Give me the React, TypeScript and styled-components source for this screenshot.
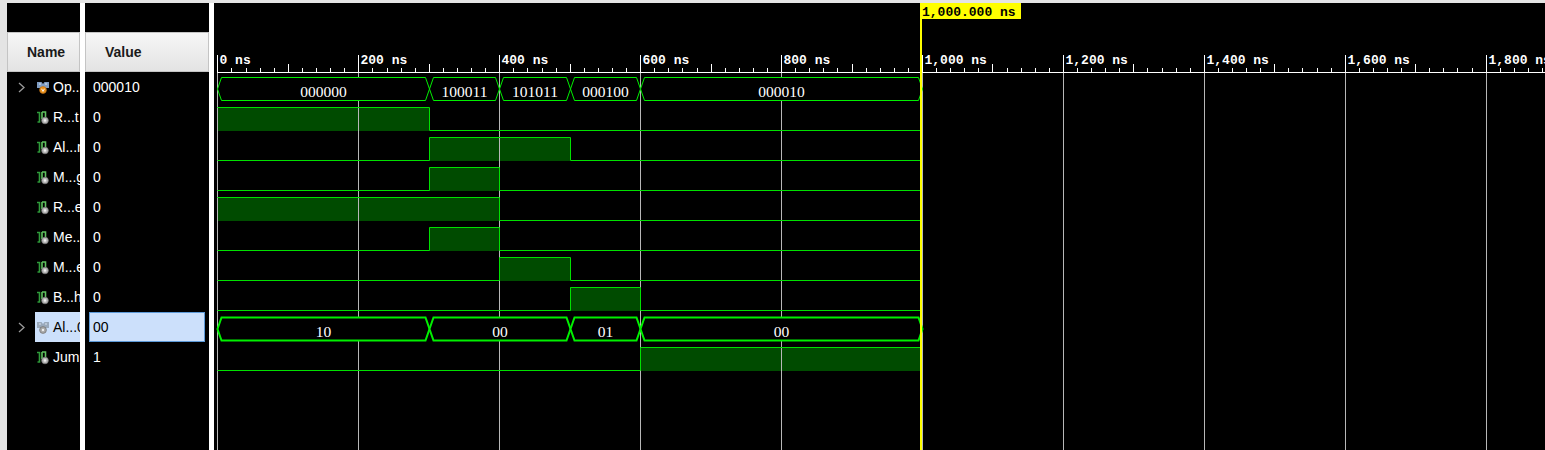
import React from 'react';
import styled, { createGlobalStyle } from 'styled-components';

const GlobalStyle = createGlobalStyle`
  html, body {
    margin: 0;
    padding: 0;
    background: #e4e4e4;
    overflow: hidden;
  }
`;

type Seg = [number, number, string];
type Signal = {
  name: string;
  value: string;
  kind: 'bus' | 'bit';
  segs?: Seg[];
  highs?: [number, number][];
  selected?: boolean;
};

const signals: Signal[] = [
  {
    name: 'Op...',
    value: '000010',
    kind: 'bus',
    segs: [
      [0, 300, '000000'],
      [300, 400, '100011'],
      [400, 500, '101011'],
      [500, 600, '000100'],
      [600, 1000, '000010'],
    ],
  },
  { name: 'R...t', value: '0', kind: 'bit', highs: [[0, 300]] },
  { name: 'Al...n', value: '0', kind: 'bit', highs: [[300, 500]] },
  { name: 'M...g', value: '0', kind: 'bit', highs: [[300, 400]] },
  { name: 'R...e', value: '0', kind: 'bit', highs: [[0, 400]] },
  { name: 'Me...', value: '0', kind: 'bit', highs: [[300, 400]] },
  { name: 'M...e', value: '0', kind: 'bit', highs: [[400, 500]] },
  { name: 'B...h', value: '0', kind: 'bit', highs: [[500, 600]] },
  {
    name: 'Al...0',
    value: '00',
    kind: 'bus',
    selected: true,
    segs: [
      [0, 300, '10'],
      [300, 500, '00'],
      [500, 600, '01'],
      [600, 1000, '00'],
    ],
  },
  { name: 'Jump', value: '1', kind: 'bit', highs: [[600, 1000]] },
];

const ROW_TOP = 72;
const ROW_H = 30;
const T0 = 217.4;
const PX = 0.7046;
const END = 1000;
const tx = (t: number) => T0 + t * PX;

const Frame = styled.div`
  width: 1545px;
  height: 450px;
  box-sizing: border-box;
  padding: 3px 0 0 7px;
  display: flex;
  background: #e4e4e4;
  font-family: 'Liberation Sans', Arial, sans-serif;
`;

const Column = styled.div<{ $w: number }>`
  width: ${({ $w }) => $w}px;
  flex: none;
  background: #000;
  display: flex;
  flex-direction: column;
  padding-top: 29px;
  box-sizing: border-box;
`;

const Divider = styled.div`
  width: 5px;
  flex: none;
  background: #fff;
`;

const HeaderCell = styled.div`
  height: 40px;
  box-sizing: border-box;
  border: 1px solid #c4c4c4;
  background: linear-gradient(#f6f6f6, #e3e3e3);
  display: flex;
  align-items: center;
  padding-left: 19px;
  font-size: 14px;
  font-weight: bold;
  color: #1a1a1a;
`;

const NameRow = styled.div`
  height: ${ROW_H}px;
  display: flex;
  align-items: center;
  overflow: hidden;
`;

const Chevron = styled.div`
  width: 28px;
  flex: none;
  display: flex;
  justify-content: flex-end;
  padding-right: 10px;
  box-sizing: border-box;
`;

const Label = styled.div<{ $selected?: boolean }>`
  flex: 1;
  min-width: 0;
  height: 100%;
  display: flex;
  align-items: center;
  gap: 3px;
  padding-left: 1px;
  background: ${({ $selected }) => ($selected ? '#cce0fb' : 'transparent')};
  color: ${({ $selected }) => ($selected ? '#000' : '#fff')};
  font-size: 14px;
  white-space: nowrap;
  overflow: hidden;

  svg {
    flex: none;
  }
`;

const ValueRow = styled.div`
  height: ${ROW_H}px;
  padding: 0 4px;
  display: flex;
`;

const ValueBox = styled.div<{ $selected?: boolean }>`
  flex: 1;
  box-sizing: border-box;
  display: flex;
  align-items: center;
  padding-left: 3px;
  border: 1px solid ${({ $selected }) => ($selected ? '#5d9ad8' : 'transparent')};
  background: ${({ $selected }) => ($selected ? '#cce0fb' : 'transparent')};
  color: ${({ $selected }) => ($selected ? '#000' : '#fff')};
  font-size: 14px;
`;

const WavePanel = styled.div`
  flex: 1;
  background: #000;
  overflow: hidden;
`;

const ChevronIcon = () => (
  <svg width="7" height="11" viewBox="0 0 7 11">
    <path d="M1 1 L6 5.5 L1 10" fill="none" stroke="#9a9a9a" strokeWidth="1.3" />
  </svg>
);

const BitIcon = () => (
  <svg width="14" height="15" viewBox="0 0 14 15">
    <path d="M1 2.5 H3.5 V12 H1.5" fill="none" stroke="#2f9b3a" strokeWidth="1.6" />
    <path d="M6 2 V9 M6 2 H9.5 V7" fill="none" stroke="#5fc25f" strokeWidth="1.6" />
    <circle cx="9" cy="10.5" r="3.3" fill="#b9b9b9" stroke="#7a7a7a" strokeWidth="0.8" />
    <circle cx="9" cy="10.5" r="1.2" fill="#eee" />
  </svg>
);

const BusIcon = ({ muted }: { muted?: boolean }) => (
  <svg width="14" height="15" viewBox="0 0 14 15">
    <path d="M1 2 H5.5 L7 4 L8.5 2 H13 V8 H1 Z" fill={muted ? '#9aa9bb' : '#7f9cc2'} />
    <path d="M3 4 H5 M9 4 H11" stroke="#dbe4ef" strokeWidth="1" />
    <circle cx="7" cy="10" r="3.4" fill={muted ? '#a8a8a8' : '#ec9420'} stroke={muted ? '#6f6f6f' : '#b86a10'} strokeWidth="0.7" />
    {muted ? (
      <circle cx="7" cy="10" r="1.2" fill="#eee" />
    ) : (
      <path d="M5.6 8.8 L7 11.4 L8.4 8.8" fill="none" stroke="#fff" strokeWidth="0.9" />
    )}
  </svg>
);

const Ruler = () => {
  const ticks: React.ReactNode[] = [];
  for (let t = 0; t <= 1900; t += 20) {
    const x = Math.round(tx(t)) + 0.5;
    const major = t % 200 === 0;
    const mid = t % 100 === 0;
    const y1 = major ? 55 : mid ? 64 : 68;
    ticks.push(<line key={'t' + t} x1={x} x2={x} y1={y1} y2={72} stroke="#fff" strokeWidth="1" />);
    if (major) {
      const label = t >= 1000 ? `${Math.floor(t / 1000)},${String(t % 1000).padStart(3, '0')} ns` : `${t} ns`;
      ticks.push(
        <text key={'l' + t} x={x + 2} y={64} fill="#fff" fontFamily="'Liberation Mono', monospace" fontSize="13" fontWeight="bold">
          {label}
        </text>,
      );
    }
  }
  return (
    <g>
      <line x1={217} x2={1545} y1={72.5} y2={72.5} stroke="#fff" strokeWidth="1" />
      {ticks}
    </g>
  );
};

const Grid = () => {
  const lines: React.ReactNode[] = [];
  for (let t = 0; t <= 1800; t += 200) {
    const x = Math.round(tx(t)) + 0.5;
    lines.push(<line key={t} x1={x} x2={x} y1={73} y2={450} stroke="#b8b8b8" strokeWidth="1" />);
  }
  return <g>{lines}</g>;
};

const bitPath = (top: number, highs: [number, number][]) => {
  const hi = top + 5.5;
  const lo = top + 28.5;
  const level = (t: number) => highs.some(([a, b]) => t >= a && t < b);
  let d = `M${tx(0)} ${level(0) ? hi : lo}`;
  const edges = Array.from(new Set(highs.flat())).filter((t) => t > 0 && t < END).sort((a, b) => a - b);
  edges.forEach((t) => {
    const x = Math.round(tx(t)) + 0.5;
    d += ` H${x} V${level(t) ? hi : lo}`;
  });
  d += ` H${tx(END)}`;
  return d;
};

const BitFills = ({ top, highs }: { top: number; highs: [number, number][] }) => (
  <g>
    {highs.map(([a, b]) => (
      <rect key={a} x={Math.round(tx(a))} y={top + 5} width={Math.round(tx(b)) - Math.round(tx(a))} height={24} fill="#004b00" />
    ))}
  </g>
);

const Bus = ({ top, segs, thick }: { top: number; segs: Seg[]; thick?: boolean }) => {
  const t1 = top + 5.5;
  const b1 = top + 28.5;
  const mid = (t1 + b1) / 2;
  const s = 4;
  return (
    <g>
      {segs.map(([a, b, v]) => {
        const xa = Math.round(tx(a)) + 0.5;
        const xb = Math.round(tx(b)) + 0.5;
        const pts = `${xa},${mid} ${xa + s},${t1} ${xb - s},${t1} ${xb},${mid} ${xb - s},${b1} ${xa + s},${b1}`;
        return (
          <g key={a}>
            <polygon points={pts} fill="#000" stroke="#00f000" strokeWidth={thick ? 2 : 1} />
            <text
              x={(xa + xb) / 2}
              y={top + 25}
              textAnchor="middle"
              fill="#fff"
              fontFamily="'Liberation Serif', serif"
              fontSize="15.5"
            >
              {v}
            </text>
          </g>
        );
      })}
    </g>
  );
};

const Waveform = () => (
  <svg width="1331" height="447" viewBox="214 3 1331 447" style={{ display: 'block' }}>
    <Ruler />
    {signals.map((s, i) =>
      s.kind === 'bit' ? <BitFills key={i} top={ROW_TOP + i * ROW_H} highs={s.highs!} /> : null,
    )}
    <Grid />
    {signals.map((s, i) =>
      s.kind === 'bus' ? (
        <Bus key={i} top={ROW_TOP + i * ROW_H} segs={s.segs!} thick={s.selected} />
      ) : (
        <path key={i} d={bitPath(ROW_TOP + i * ROW_H, s.highs!)} fill="none" stroke="#00e000" strokeWidth="1" />
      ),
    )}
    <rect x={920} y={3} width={2} height={447} fill="#ffff00" />
    <rect x={921} y={3} width={100} height={16} fill="#ffff00" />
    <text x={922} y={16} fill="#000" fontFamily="'Liberation Mono', monospace" fontSize="13" fontWeight="bold">
      1,000.000 ns
    </text>
  </svg>
);

export default function App() {
  return (
    <>
      <GlobalStyle />
      <Frame>
        <Column $w={73}>
          <HeaderCell>Name</HeaderCell>
          {signals.map((s) => (
            <NameRow key={s.name}>
              <Chevron>{s.kind === 'bus' && <ChevronIcon />}</Chevron>
              <Label $selected={s.selected}>
                {s.kind === 'bus' ? <BusIcon muted={s.selected} /> : <BitIcon />}
                <span>{s.name}</span>
              </Label>
            </NameRow>
          ))}
        </Column>
        <Divider />
        <Column $w={124}>
          <HeaderCell>Value</HeaderCell>
          {signals.map((s) => (
            <ValueRow key={s.name}>
              <ValueBox $selected={s.selected}>{s.value}</ValueBox>
            </ValueRow>
          ))}
        </Column>
        <Divider />
        <WavePanel>
          <Waveform />
        </WavePanel>
      </Frame>
    </>
  );
}
